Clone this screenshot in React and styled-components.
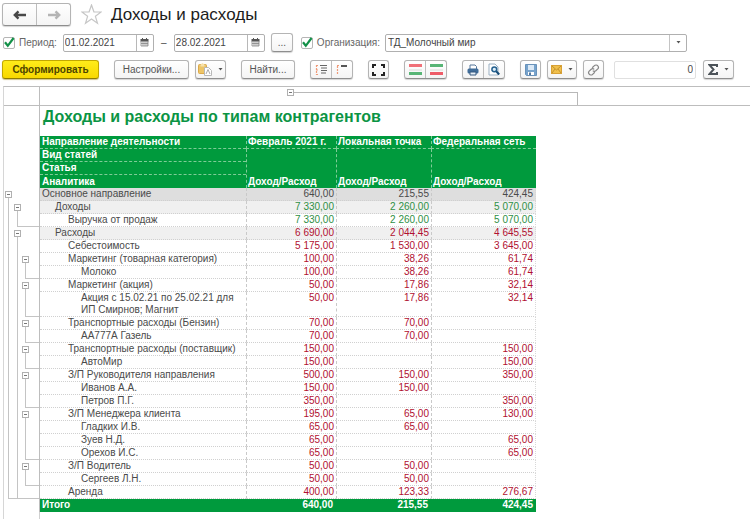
import React from "react";
import styled, { createGlobalStyle } from "styled-components";

const GlobalStyle = createGlobalStyle`
  *, *::before, *::after { box-sizing: border-box; }
  html, body, #root { height: 100%; }
  body {
    margin: 0;
    background: #fff;
    color: #4a4a4a;
    font: 10px/12px "Liberation Sans", Arial, sans-serif;
  }
  button, input, select { font: inherit; color: inherit; margin: 0; }
`;

const Page = styled.div`
  display: flex;
  flex-direction: column;
  min-height: 100%;
`;

const TitleBar = styled.header`
  display: flex;
  align-items: center;
  padding: 3px 2px 0;
  height: 26px;
`;

const ButtonGroup = styled.div`
  display: flex;
  flex: none;
  height: ${(p) => p.$height || 19}px;
  border: 1px solid #b4b4b4;
  border-bottom-color: #8e8e8e;
  border-radius: 3px;
  background: linear-gradient(#fff, #f4f4f4);
  box-shadow: 0 1px 1px #d4d4d4;
`;

const ToolButton = styled.button`
  display: flex;
  flex: 1;
  align-items: center;
  justify-content: center;
  gap: 6px;
  min-width: ${(p) => p.$width}px;
  padding: 0;
  border: 0;
  background: none;
  white-space: nowrap;
  color: #555;
  & + & { border-left: 1px solid #bdbdbd; }
`;

const PrimaryButton = styled.button`
  width: 97px;
  height: 19px;
  padding: 0;
  border: 1px solid #c2a800;
  border-bottom-color: #8f7c00;
  border-radius: 3px;
  background: linear-gradient(#ffec1a, #f8d800);
  box-shadow: 0 1px 1px #cfc48a;
  font-weight: bold;
  color: #4d4500;
`;

const StarButton = styled.button`
  display: flex;
  margin: 0 9px 0 10px;
  padding: 0;
  border: 0;
  background: none;
`;

const PageTitle = styled.h1`
  margin: 0;
  font-size: 17px;
  line-height: 20px;
  font-weight: normal;
  color: #1c1c1c;
`;

const FilterBar = styled.div`
  display: flex;
  align-items: center;
  padding: 7px 63px 0 3px;
`;

const CheckLabel = styled.label`
  display: flex;
  align-items: center;
  gap: 4px;
  margin-right: ${(p) => p.$after}px;
  white-space: nowrap;
  color: #666;
`;

const CheckBox = styled.span`
  display: grid;
  width: 12px;
  height: 12px;
  & > * { grid-area: 1 / 1; }
  input {
    appearance: none;
    width: 12px;
    height: 12px;
    border: 1px solid #b5b5b5;
    border-radius: 2px;
    background: #fff;
  }
  svg { pointer-events: none; overflow: visible; visibility: hidden; }
  input:checked + svg { visibility: visible; }
`;

const DateField = styled.div`
  display: flex;
  width: 91px;
  height: 18px;
  border: 1px solid #b0b0b0;
  border-radius: 2px;
  background: #fff;
  input {
    flex: 1;
    min-width: 0;
    padding: 0 1px;
    border: 0;
    background: none;
    color: #444;
  }
  button {
    display: flex;
    align-items: center;
    justify-content: center;
    width: 17px;
    padding: 0;
    border: 0;
    border-left: 1px solid #b8b8b8;
    background: none;
  }
`;

const Dash = styled.span`
  width: 20px;
  text-align: center;
`;

const MoreSlot = styled.div`
  margin: 0 8px 0 6px;
`;

const SelectField = styled.div`
  display: grid;
  flex: 1;
  height: 18px;
  border: 1px solid #b0b0b0;
  border-radius: 2px;
  & > * { grid-area: 1 / 1; }
  select {
    appearance: none;
    padding: 0 18px 0 2px;
    border: 0;
    background: none;
    color: #444;
  }
`;

const SelectArrow = styled.span`
  display: flex;
  align-items: center;
  justify-content: center;
  justify-self: end;
  width: 17px;
  border-left: 1px solid #c4c4c4;
  pointer-events: none;
`;

const Toolbar = styled.div`
  display: flex;
  align-items: center;
  gap: 15px;
  padding: 8px 2px 7px;
`;

const Cluster = styled.div`
  display: flex;
  align-items: center;
  gap: 6px;
`;

const SumField = styled.input`
  width: 82px;
  height: 18px;
  margin: 0 1px 0 4px;
  padding: 0 2px;
  border: 1px solid #e0e0e0;
  border-radius: 2px;
  text-align: right;
`;

const Report = styled.main`
  display: flex;
  flex: 1;
  flex-direction: column;
  margin-left: 3px;
  border-top: 1px solid #bdbdbd;
  border-left: 1px solid #d6d6d6;
`;

const ColumnOutline = styled.div`
  display: flex;
  height: 19px;
  border-bottom: 1px solid #bdbdbd;
`;

const OutlineCorner = styled.div`
  width: 36px;
  border-right: 1px solid #bdbdbd;
`;

const OutlineBranch = styled.div`
  display: flex;
  flex: none;
  width: 291px;
  margin: 2px 0 0 247px;
`;

const OutlineRail = styled.div`
  flex: 1;
  margin-top: 3px;
  border-top: 1px solid #b8b8b8;
  border-right: 1px solid #b8b8b8;
`;

const FoldButton = styled.button`
  display: block;
  width: 7px;
  height: 7px;
  margin: 0;
  padding: 0;
  border: 0;
  background: #fff;
  svg { display: block; }
`;

const ReportTable = styled.table`
  width: 532px;
  border-collapse: separate;
  border-spacing: 0;
  table-layout: fixed;
`;

const GutterCell = styled.td`
  height: ${(p) => p.$height || 13}px;
  padding: 0;
  border-right: 1px solid #bdbdbd;
`;

const Gutter = styled.div`
  display: grid;
  grid-template-columns: 9px 8px 1fr;
  height: ${(p) => p.$height}px;
  padding-left: 4px;
`;

const GutterSlot = styled.div`
  display: flex;
  flex-direction: column;
  padding-top: ${(p) => (p.$fold ? 3 : 0)}px;
  border-bottom: ${(p) => (p.$closed ? "1px solid #c4c4c4" : "0")};
  ${FoldButton} { margin-left: -3px; }
`;

const Stem = styled.span`
  flex: 1;
  width: 1px;
  background: #c4c4c4;
`;

const ReportTitle = styled.h2`
  margin: 0;
  font-size: 16px;
  line-height: 18px;
  color: #0b9444;
  white-space: nowrap;
`;

const TitleCell = styled.td`
  height: 30px;
  padding: 2px 3px 0;
  vertical-align: top;
`;

const HeadCell = styled.th`
  height: 13px;
  padding: 0 ${(p) => (p.$first ? 2 : 1)}px;
  border-bottom: ${(p) => (p.$last ? "0" : "1px dashed #7fcc97")};
  border-left: ${(p) => (p.$first ? "0" : "1px dashed #7fcc97")};
  background: #009a3d;
  color: #fff;
  line-height: 12px;
  text-align: left;
  vertical-align: bottom;
  white-space: nowrap;
`;

const rowFill = (level) => (level === 0 ? "#dedede" : level === 1 ? "#f0f0f0" : "#fff");

const NameCell = styled.th`
  padding: 0 3px 0 ${(p) => 2 + p.$level * 13}px;
  border-bottom: 1px dotted #d0d0d0;
  background: ${(p) => rowFill(p.$level)};
  font-weight: normal;
  line-height: 12px;
  text-align: left;
  vertical-align: top;
`;

const tones = { plain: "#4a4a4a", income: "#2f8f45", expense: "#b01030" };

const ValueCell = styled.td`
  padding: 0 2px;
  border-bottom: 1px dotted #d0d0d0;
  border-left: 1px dashed #c9c9c9;
  background: ${(p) => rowFill(p.$level)};
  color: ${(p) => tones[p.$tone]};
  line-height: 12px;
  text-align: right;
  vertical-align: top;
  &:last-child { border-right: 1px dotted #d8d8d8; }
`;

const TotalCell = styled.td`
  height: 13px;
  padding: 0 3px 0 2px;
  background: #009a3d;
  color: #fff;
  font-weight: bold;
  line-height: 12px;
  text-align: ${(p) => (p.$name ? "left" : "right")};
  vertical-align: top;
`;

const TailGutter = styled.div`
  flex: 1;
  width: 36px;
  border-right: 1px solid #d0d0d0;
`;

/* Gutter codes, one letter per outline level: f fold, l line, e closing line, - empty */
const rows = [
  ["Основное направление", 0, "f--", "plain", "640,00", "215,55", "424,45"],
  ["Доходы", 1, "lf-", "income", "7 330,00", "2 260,00", "5 070,00"],
  ["Выручка от продаж", 2, "le-", "income", "7 330,00", "2 260,00", "5 070,00"],
  ["Расходы", 1, "lf-", "expense", "6 690,00", "2 044,45", "4 645,55"],
  ["Себестоимость", 2, "ll-", "expense", "5 175,00", "1 530,00", "3 645,00"],
  ["Маркетинг (товарная категория)", 2, "llf", "expense", "100,00", "38,26", "61,74"],
  ["Молоко", 3, "lle", "expense", "100,00", "38,26", "61,74"],
  ["Маркетинг (акция)", 2, "llf", "expense", "50,00", "17,86", "32,14"],
  ["Акция с 15.02.21 по 25.02.21 для ИП Смирнов; Магнит", 3, "lle", "expense", "50,00", "17,86", "32,14", 25],
  ["Транспортные расходы (Бензин)", 2, "llf", "expense", "70,00", "70,00", ""],
  ["АА777А Газель", 3, "lle", "expense", "70,00", "70,00", ""],
  ["Транспортные расходы (поставщик)", 2, "llf", "expense", "150,00", "", "150,00"],
  ["АвтоМир", 3, "lle", "expense", "150,00", "", "150,00"],
  ["З/П Руководителя направления", 2, "llf", "expense", "500,00", "150,00", "350,00"],
  ["Иванов А.А.", 3, "lll", "expense", "150,00", "150,00", ""],
  ["Петров П.Г.", 3, "lle", "expense", "350,00", "", "350,00"],
  ["З/П Менеджера клиента", 2, "llf", "expense", "195,00", "65,00", "130,00"],
  ["Гладких И.В.", 3, "lll", "expense", "65,00", "65,00", ""],
  ["Зуев Н.Д.", 3, "lll", "expense", "65,00", "", "65,00"],
  ["Орехов И.С.", 3, "lle", "expense", "65,00", "", "65,00"],
  ["З/П Водитель", 2, "llf", "expense", "50,00", "50,00", ""],
  ["Сергеев Л.Н.", 3, "lle", "expense", "50,00", "50,00", ""],
  ["Аренда", 2, "ee-", "expense", "400,00", "123,33", "276,67"],
];

const Fold = () => (
  <FoldButton aria-label="Свернуть">
    <svg width="7" height="7" viewBox="0 0 7 7" fill="none" stroke="#b0b0b0">
      <rect x=".5" y=".5" width="6" height="6" />
      <path d="M2 3.5h3" stroke="#777" />
    </svg>
  </FoldButton>
);

const OutlineGutter = ({ code, height }) => {
  const firstEnd = code.indexOf("e");
  return (
    <Gutter $height={height}>
      {[...code].map((c, i) => (
        <GutterSlot key={i} $fold={c === "f"} $closed={firstEnd >= 0 && i >= firstEnd}>
          {c === "f" && <Fold />}
          {c !== "-" && <Stem />}
        </GutterSlot>
      ))}
    </Gutter>
  );
};

const Tick = () => (
  <svg width="12" height="12" viewBox="0 0 12 12" fill="none" stroke="#129048" strokeWidth="2.2">
    <path d="M2 5.2 4.8 8.8 10.6 1" />
  </svg>
);

const Caret = () => (
  <svg width="5" height="3" viewBox="0 0 5 3"><path d="M.5 0h4L2.5 2.6z" fill="#555" /></svg>
);

const Arrow = ({ color, flip }) => (
  <svg width="14" height="10" viewBox="0 0 14 10" fill="none" stroke={color} strokeWidth="2.4">
    <path d={flip ? "M1 5h11M8.5 1.3 12.2 5 8.5 8.7" : "M13 5H2M5.5 1.3 1.8 5 5.5 8.7"} />
  </svg>
);

const Star = () => (
  <svg width="21" height="21" viewBox="0 0 21 21" fill="#fff" stroke="#c6c6c6" strokeWidth="1.2">
    <path d="m10.5 1 2.4 6.8 7.2.2-5.7 4.3 2.1 7-6-4.2-6 4.2 2.1-7L.9 8l7.2-.2z" />
  </svg>
);

const CalendarIcon = () => (
  <svg width="9" height="9" viewBox="0 0 9 9">
    <path d="M.5 1h8v2.5h-8z" fill="#555" />
    <path d="M2.5 0v2M6.5 0v2" stroke="#555" />
    <path d="M1 3v5h7V3M1 5.5h7M3 3v5M5 3v5M7 3v5" fill="none" stroke="#858585" strokeWidth=".8" />
  </svg>
);

const PasteIcon = () => (
  <svg width="14" height="13" viewBox="0 0 14 13">
    <rect x=".5" y="1.5" width="8" height="9" rx="1" fill="#edc568" stroke="#dca94a" />
    <path d="M2.5 1.5 4.5 0l2 1.5v2h-4z" fill="#f7e3ad" />
    <path d="M6.5 4.5h4l3 3v5h-7z" fill="#fff" stroke="#b8b8b8" />
    <path d="m8 11 2-4.5 2 4.5" fill="none" stroke="#aaa" />
  </svg>
);

const TreeIcon = ({ short }) => (
  <svg width="13" height="12" viewBox="0 0 13 12" fill="none">
    <path d={short ? "M1.5 2v9M1 1.5h3" : "M1.5 1v10M1 1.5h3M1 6h3M1 10.5h3"} stroke="#ef9a78" strokeWidth="1.2" strokeDasharray="2 1" />
    {short ? (
      <path d="M5 2h6" stroke="#555" strokeWidth="2" />
    ) : (
      <path d="M5 1.5h7M6 4h6M6 6.5h6M6 9h5" stroke="#666" strokeWidth="1.2" />
    )}
  </svg>
);

const ExpandIcon = () => (
  <svg width="13" height="12" viewBox="0 0 13 12" fill="none" stroke="#222" strokeWidth="2">
    <path d="M1 4V1h3M9 1h3v3M12 8v3H9M4 11H1V8" />
  </svg>
);

const BandIcon = ({ top, bottom }) => (
  <svg width="13" height="12" viewBox="0 0 13 12">
    <path d="M0 1.5h13" stroke={top} strokeWidth="3" />
    <path d="M0 9.5h13" stroke={bottom} strokeWidth="3" />
    <path d="M0 6h13" stroke="#d8dcd8" />
  </svg>
);

const PrinterIcon = () => (
  <svg width="12" height="12" viewBox="0 0 12 12">
    <path d="M3 5V1h5l1.5 1.5V5" fill="#fff" stroke="#56779a" />
    <rect x=".5" y="4.5" width="11" height="5" rx="1.5" fill="#416d99" />
    <path d="M3 8h6v3H3z" fill="#e8f0f8" stroke="#34597e" />
  </svg>
);

const PreviewIcon = () => (
  <svg width="12" height="13" viewBox="0 0 12 13" fill="none">
    <path d="M1 1h6l3 3v8H1z" fill="#fff" stroke="#9bb0c3" />
    <circle cx="6.3" cy="6.3" r="2.4" fill="#dff0fb" stroke="#25618f" strokeWidth="1.5" />
    <path d="m8.2 8.3 3 3.2" stroke="#174d78" strokeWidth="2" />
  </svg>
);

const SaveIcon = () => (
  <svg width="12" height="12" viewBox="0 0 12 12">
    <path d="M.5.5h11v11h-10l-1-1z" fill="#77a3cc" stroke="#6992ba" />
    <path d="M3 1h6v5H3z" fill="#dbe9f6" />
    <path d="M3 8h6v3H3z" fill="#fff" />
    <path d="M4 8.5h2V11H4z" fill="#55789c" />
  </svg>
);

const MailIcon = () => (
  <svg width="11" height="9" viewBox="0 0 11 9" fill="none">
    <rect x=".5" y=".5" width="10" height="8" fill="#f0c04c" stroke="#d8a136" />
    <path d="m1 1 4.5 4L10 1M1 8l3-4M10 8 7 4" stroke="#b98524" strokeWidth=".8" />
  </svg>
);

const LinkIcon = () => (
  <svg width="13" height="12" viewBox="0 0 13 12" fill="none" stroke="#858585" strokeWidth="1.2">
    <path d="M5.2 3.8 7.4 1.7a2.2 2.2 0 0 1 3.4.2 2.2 2.2 0 0 1 0 3L8.8 6.8a2.2 2.2 0 0 1-3-.2" />
    <path d="M7.8 8.2 5.6 10.3a2.2 2.2 0 0 1-3.4-.2 2.2 2.2 0 0 1 0-3L4.2 5.2a2.2 2.2 0 0 1 3 .2" />
  </svg>
);

const SigmaIcon = () => (
  <svg width="10" height="11" viewBox="0 0 10 11" fill="none" stroke="#4c5359" strokeWidth="2">
    <path d="M9 3V1H1.5l4 4.5-4 4.5H9V8" />
  </svg>
);

const Check = ({ text, after }) => (
  <CheckLabel $after={after}>
    <CheckBox>
      <input type="checkbox" defaultChecked />
      <Tick />
    </CheckBox>
    {text}
  </CheckLabel>
);

const DateInput = ({ label, value }) => (
  <DateField>
    <input type="text" aria-label={label} defaultValue={value} />
    <button aria-label="Открыть календарь"><CalendarIcon /></button>
  </DateField>
);

const Tool = ({ label, width, children }) => (
  <ButtonGroup>
    <ToolButton aria-label={label} $width={width - 2}>{children}</ToolButton>
  </ButtonGroup>
);

export default function App() {
  return (
    <Page>
      <GlobalStyle />
      <TitleBar>
        <ButtonGroup $height={23}>
          <ToolButton aria-label="Назад" $width={33}><Arrow color="#484848" /></ToolButton>
          <ToolButton aria-label="Вперед" $width={34}><Arrow color="#b4b4b4" flip /></ToolButton>
        </ButtonGroup>
        <StarButton aria-label="В избранное"><Star /></StarButton>
        <PageTitle>Доходы и расходы</PageTitle>
      </TitleBar>

      <FilterBar>
        <Check text="Период:" after={6} />
        <DateInput label="Начало периода" value="01.02.2021" />
        <Dash>–</Dash>
        <DateInput label="Конец периода" value="28.02.2021" />
        <MoreSlot><Tool label="Выбрать период" width={22}>...</Tool></MoreSlot>
        <Check text="Организация:" after={5} />
        <SelectField>
          <select aria-label="Организация" defaultValue="td">
            <option value="td">ТД_Молочный мир</option>
          </select>
          <SelectArrow><Caret /></SelectArrow>
        </SelectField>
      </FilterBar>

      <Toolbar>
        <PrimaryButton>Сформировать</PrimaryButton>
        <Cluster>
          <Tool width={75}>Настройки...</Tool>
          <Tool label="Варианты отчета" width={31}><PasteIcon /><Caret /></Tool>
        </Cluster>
        <Tool width={54}>Найти...</Tool>
        <ButtonGroup>
          <ToolButton aria-label="Развернуть группы" $width={20}><TreeIcon /></ToolButton>
          <ToolButton aria-label="Свернуть группы" $width={21}><TreeIcon short /></ToolButton>
        </ButtonGroup>
        <Tool label="Во весь экран" width={21}><ExpandIcon /></Tool>
        <ButtonGroup>
          <ToolButton aria-label="Показать заголовок" $width={20}><BandIcon top="#f07078" bottom="#58b576" /></ToolButton>
          <ToolButton aria-label="Показать подвал" $width={21}><BandIcon top="#58b576" bottom="#ee5c68" /></ToolButton>
        </ButtonGroup>
        <ButtonGroup>
          <ToolButton aria-label="Печать" $width={20}><PrinterIcon /></ToolButton>
          <ToolButton aria-label="Просмотр" $width={21}><PreviewIcon /></ToolButton>
        </ButtonGroup>
        <Cluster>
          <Tool label="Сохранить" width={21}><SaveIcon /></Tool>
          <Tool label="Отправить" width={30}><MailIcon /><Caret /></Tool>
          <Tool label="Ссылка" width={21}><LinkIcon /></Tool>
          <SumField aria-label="Сумма" defaultValue="0" />
          <Tool label="Показатель" width={31}><SigmaIcon /><Caret /></Tool>
        </Cluster>
      </Toolbar>

      <Report>
        <ColumnOutline>
          <OutlineCorner />
          <OutlineBranch><Fold /><OutlineRail /></OutlineBranch>
        </ColumnOutline>
        <ReportTable>
          <colgroup>
            <col width="36" />
            <col width="206" />
            <col width="90" />
            <col width="95" />
            <col width="105" />
          </colgroup>
          <thead>
            <tr>
              <GutterCell />
              <TitleCell colSpan={4}><ReportTitle>Доходы и расходы по типам контрагентов</ReportTitle></TitleCell>
            </tr>
            <tr>
              <GutterCell />
              <HeadCell $first>Направление деятельности</HeadCell>
              <HeadCell>Февраль 2021 г.</HeadCell>
              <HeadCell>Локальная точка</HeadCell>
              <HeadCell>Федеральная сеть</HeadCell>
            </tr>
            <tr>
              <GutterCell />
              <HeadCell $first>Вид статей</HeadCell>
              <HeadCell rowSpan={3} $last>Доход/Расход</HeadCell>
              <HeadCell rowSpan={3} $last>Доход/Расход</HeadCell>
              <HeadCell rowSpan={3} $last>Доход/Расход</HeadCell>
            </tr>
            <tr>
              <GutterCell />
              <HeadCell $first>Статья</HeadCell>
            </tr>
            <tr>
              <GutterCell />
              <HeadCell $first $last>Аналитика</HeadCell>
            </tr>
          </thead>
          <tbody>
            {rows.map(([name, level, code, tone, a, b, c, height = 13]) => (
              <tr key={name}>
                <GutterCell $height={height}><OutlineGutter code={code} height={height} /></GutterCell>
                <NameCell scope="row" $level={level}>{name}</NameCell>
                {[a, b, c].map((v, i) => (
                  <ValueCell key={i} $level={level} $tone={tone}>{v}</ValueCell>
                ))}
              </tr>
            ))}
          </tbody>
          <tfoot>
            <tr>
              <GutterCell />
              <TotalCell $name>Итого</TotalCell>
              <TotalCell>640,00</TotalCell>
              <TotalCell>215,55</TotalCell>
              <TotalCell>424,45</TotalCell>
            </tr>
          </tfoot>
        </ReportTable>
        <TailGutter />
      </Report>
    </Page>
  );
}
